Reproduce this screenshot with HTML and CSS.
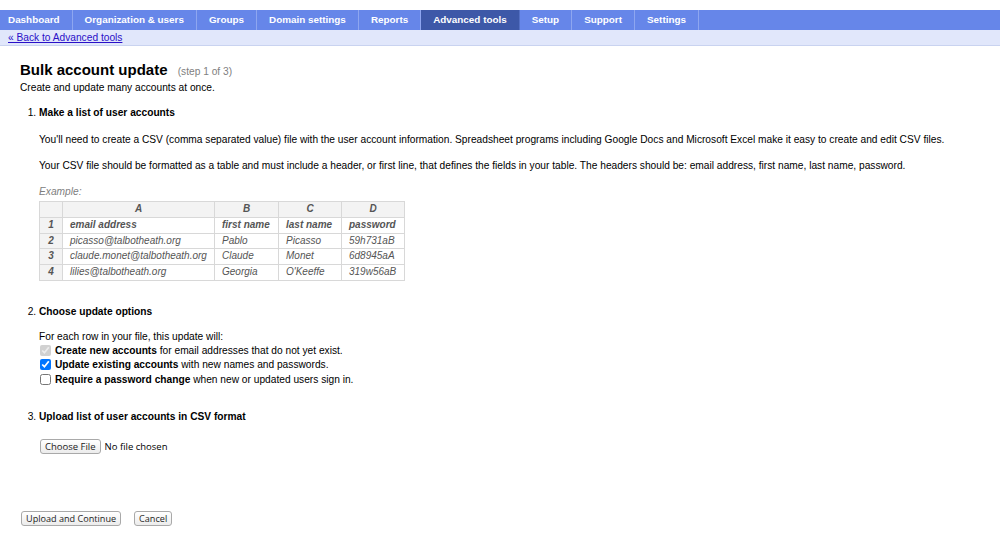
FILE: index.html
```html
<!DOCTYPE html>
<html lang="en">
<head>
    <meta charset="UTF-8">
    <title>Bulk account update</title>
    <link rel="stylesheet" href="styles.css">
</head>
<body>
    <div class="tabs">
        <a class="tab" href="#">Dashboard</a>
        <a class="tab" href="#">Organization &amp; users</a>
        <a class="tab" href="#">Groups</a>
        <a class="tab" href="#">Domain settings</a>
        <a class="tab" href="#">Reports</a>
        <a class="tab active" href="#">Advanced tools</a>
        <a class="tab" href="#">Setup</a>
        <a class="tab" href="#">Support</a>
        <a class="tab" href="#">Settings</a>
    </div>
    <div class="subbar">
        <a href="#">&laquo; Back to Advanced tools</a>
    </div>

    <div class="content">
        <h1>Bulk account update <span class="step">(step 1 of 3)</span></h1>
        <p class="intro">Create and update many accounts at once.</p>

        <ol class="steps">
            <li>
                <h2>Make a list of user accounts</h2>
                <p>You'll need to create a CSV (comma separated value) file with the user account information. Spreadsheet programs including Google Docs and Microsoft Excel make it easy to create and edit CSV files.</p>
                <p>Your CSV file should be formatted as a table and must include a header, or first line, that defines the fields in your table. The headers should be: email address, first name, last name, password.</p>
                <div class="example-label">Example:</div>
                <table class="sheet">
                    <colgroup>
                        <col class="w-num">
                        <col class="w-a">
                        <col class="w-b">
                        <col class="w-c">
                        <col class="w-d">
                    </colgroup>
                    <tr class="cols">
                        <th class="num"></th>
                        <th>A</th>
                        <th>B</th>
                        <th>C</th>
                        <th>D</th>
                    </tr>
                    <tr class="head">
                        <td class="num">1</td>
                        <td>email address</td>
                        <td>first name</td>
                        <td>last name</td>
                        <td>password</td>
                    </tr>
                    <tr>
                        <td class="num">2</td>
                        <td>picasso@talbotheath.org</td>
                        <td>Pablo</td>
                        <td>Picasso</td>
                        <td>59h731aB</td>
                    </tr>
                    <tr>
                        <td class="num">3</td>
                        <td>claude.monet@talbotheath.org</td>
                        <td>Claude</td>
                        <td>Monet</td>
                        <td>6d8945aA</td>
                    </tr>
                    <tr>
                        <td class="num">4</td>
                        <td>lilies@talbotheath.org</td>
                        <td>Georgia</td>
                        <td>O'Keeffe</td>
                        <td>319w56aB</td>
                    </tr>
                </table>
            </li>
            <li>
                <h2>Choose update options</h2>
                <div class="options">
                    <div>For each row in your file, this update will:</div>
                    <label class="opt"><input type="checkbox" checked disabled> <b>Create new accounts</b>&nbsp;for email addresses that do not yet exist.</label>
                    <label class="opt"><input type="checkbox" checked> <b>Update existing accounts</b>&nbsp;with new names and passwords.</label>
                    <label class="opt"><input type="checkbox"> <b>Require a password change</b>&nbsp;when new or updated users sign in.</label>
                </div>
            </li>
            <li class="last">
                <h2>Upload list of user accounts in CSV format</h2>
                <div class="upload">
                    <button class="btn">Choose File</button>
                    <span class="nofile">No file chosen</span>
                </div>
            </li>
        </ol>

        <div class="actions">
            <button class="btn">Upload and Continue</button>
            <button class="btn">Cancel</button>
        </div>
    </div>
</body>
</html>
```

FILE: styles.css
```css
body {
    margin: 0;
    font-family: "Liberation Sans", Arial, sans-serif;
    font-size: 10.2px;
    color: #000;
    background: #fff;
}

/* top navigation */
.tabs {
    display: flex;
    margin-top: 10px;
    height: 20px;
    background: #6686e9;
}
.tab {
    display: block;
    padding: 0 12px;
    line-height: 20px;
    color: #fff;
    font-weight: bold;
    font-size: 9.9px;
    text-decoration: none;
    border-right: 1px solid #8ea6f0;
}
.tab:first-child {
    padding-left: 8px;
}
.tab.active {
    background: #3d58a8;
    border-right-color: #5470c4;
}
.subbar {
    height: 15px;
    padding: 0 8px;
    line-height: 16px;
    background: #e1e7fb;
    border-bottom: 1px solid #c9d3f0;
}
.subbar a {
    color: #2a10c8;
}

/* page body */
.content {
    padding: 0 20px;
}
h1 {
    margin: 14px 0 0;
    font-size: 15px;
    line-height: 19px;
}
.step {
    margin-left: 6px;
    font-size: 10.2px;
    font-weight: normal;
    color: #808080;
}
.intro {
    margin: 0;
    line-height: 13px;
}
.steps {
    margin: 12px 0 0;
    padding-left: 19px;
}
.steps li {
    margin-bottom: 24px;
}
.steps li.last {
    margin-bottom: 0;
}
h2 {
    margin: 0;
    font-size: 10.2px;
    line-height: 13px;
}
.steps p {
    margin: 14px 0 0;
    line-height: 13px;
}
.steps p + p {
    margin-top: 13px;
}
.example-label {
    margin-top: 13px;
    line-height: 13px;
    color: #808080;
    font-style: italic;
}

/* spreadsheet sample */
.sheet {
    margin-top: 3px;
    border-collapse: collapse;
    table-layout: fixed;
    font-size: 10px;
    font-style: italic;
    color: #555;
    white-space: nowrap;
}
.sheet .w-num { width: 23px; }
.sheet .w-a { width: 152px; }
.sheet .w-b { width: 64px; }
.sheet .w-c { width: 63px; }
.sheet .w-d { width: 63px; }
.sheet th,
.sheet td {
    border: 1px solid #d8d8d8;
    height: 14.8px;
    padding: 0 7px;
    text-align: left;
    line-height: 14.8px;
}
.sheet .cols th {
    background: #f3f3f3;
    text-align: center;
}
.sheet .num {
    padding: 0;
    background: #f3f3f3;
    text-align: center;
    font-weight: bold;
}
.sheet .head td {
    font-weight: bold;
}

/* options */
.options {
    margin-top: 12px;
    line-height: 13px;
}
.opt {
    display: flex;
    align-items: center;
    height: 14.5px;
}
.opt input {
    margin: 0 4px 0 1px;
    width: 11px;
    height: 11px;
}

/* upload */
.upload {
    margin-top: 16px;
    padding-left: 1px;
    display: flex;
    align-items: center;
    gap: 4px;
}
.nofile {
    font-family: "Open Sans", "Liberation Sans", sans-serif;
    font-size: 9.5px;
}
.btn {
    font-family: "Open Sans", "Liberation Sans", sans-serif;
    font-size: 9.5px;
    height: 15px;
    padding: 0 4px;
    background: linear-gradient(#ffffff, #ececec);
    border: 1px solid #a9a9a9;
    border-radius: 3px;
    color: #222;
    line-height: 12px;
}
.actions {
    margin-top: 57px;
    display: flex;
    gap: 13px;
    padding-left: 1px;
}
.actions .btn {
    font-size: 9.1px;
}
```
